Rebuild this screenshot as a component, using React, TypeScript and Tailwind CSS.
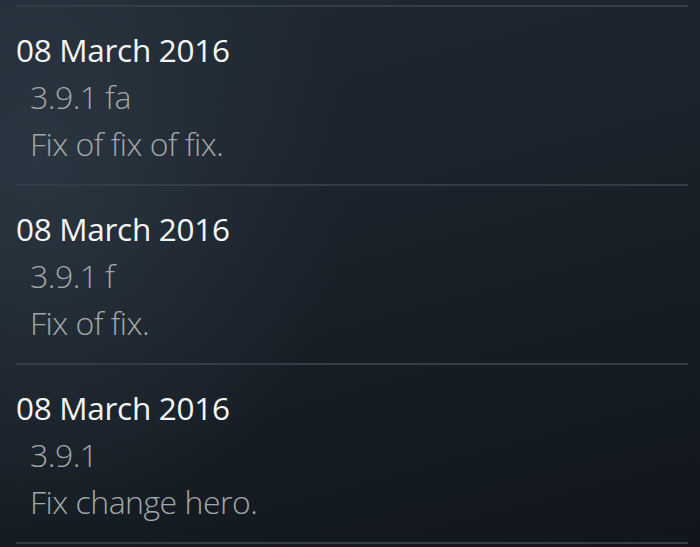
const entries = [
  { date: "08 March 2016", version: "3.9.1 fa", note: "Fix of fix of fix." },
  { date: "08 March 2016", version: "3.9.1 f", note: "Fix of fix." },
  { date: "08 March 2016", version: "3.9.1", note: "Fix change hero." },
];

function ChangeRow({ date, version, note }: { date: string; version: string; note: string }) {
  return (
    <div className="border-t-2 border-[#333d47] pt-[19px] pb-[17px]">
      <div className="h-[47px] leading-[47px] text-[31.5px] text-[#f4f5f5] tracking-[-0.3px]">{date}</div>
      <div className="h-[47px] leading-[47px] pl-[14px] text-[32px] font-light text-[#a3a7a8] tracking-[-0.5px]">{version}</div>
      <div className="h-[47px] leading-[47px] pl-[14px] text-[32px] font-light text-[#a3a7a8] tracking-[-0.5px]">{note}</div>
    </div>
  );
}

export default function App() {
  return (
    <div
      className="w-[700px] h-[547px] overflow-hidden pt-[5px] font-['Open_Sans',sans-serif] bg-[radial-gradient(ellipse_45%_70%_at_5%_30%,rgba(46,58,70,0.8)_0%,rgba(46,58,70,0.3)_60%,transparent_100%),linear-gradient(165deg,#202a35_0%,#1b232c_35%,#161d25_65%,#11161d_100%)]"
    >
      <div className="ml-4 mr-3 border-b-2 border-[#333d47]">
        {entries.map((e, i) => (
          <ChangeRow key={i} {...e} />
        ))}
      </div>
    </div>
  );
}
